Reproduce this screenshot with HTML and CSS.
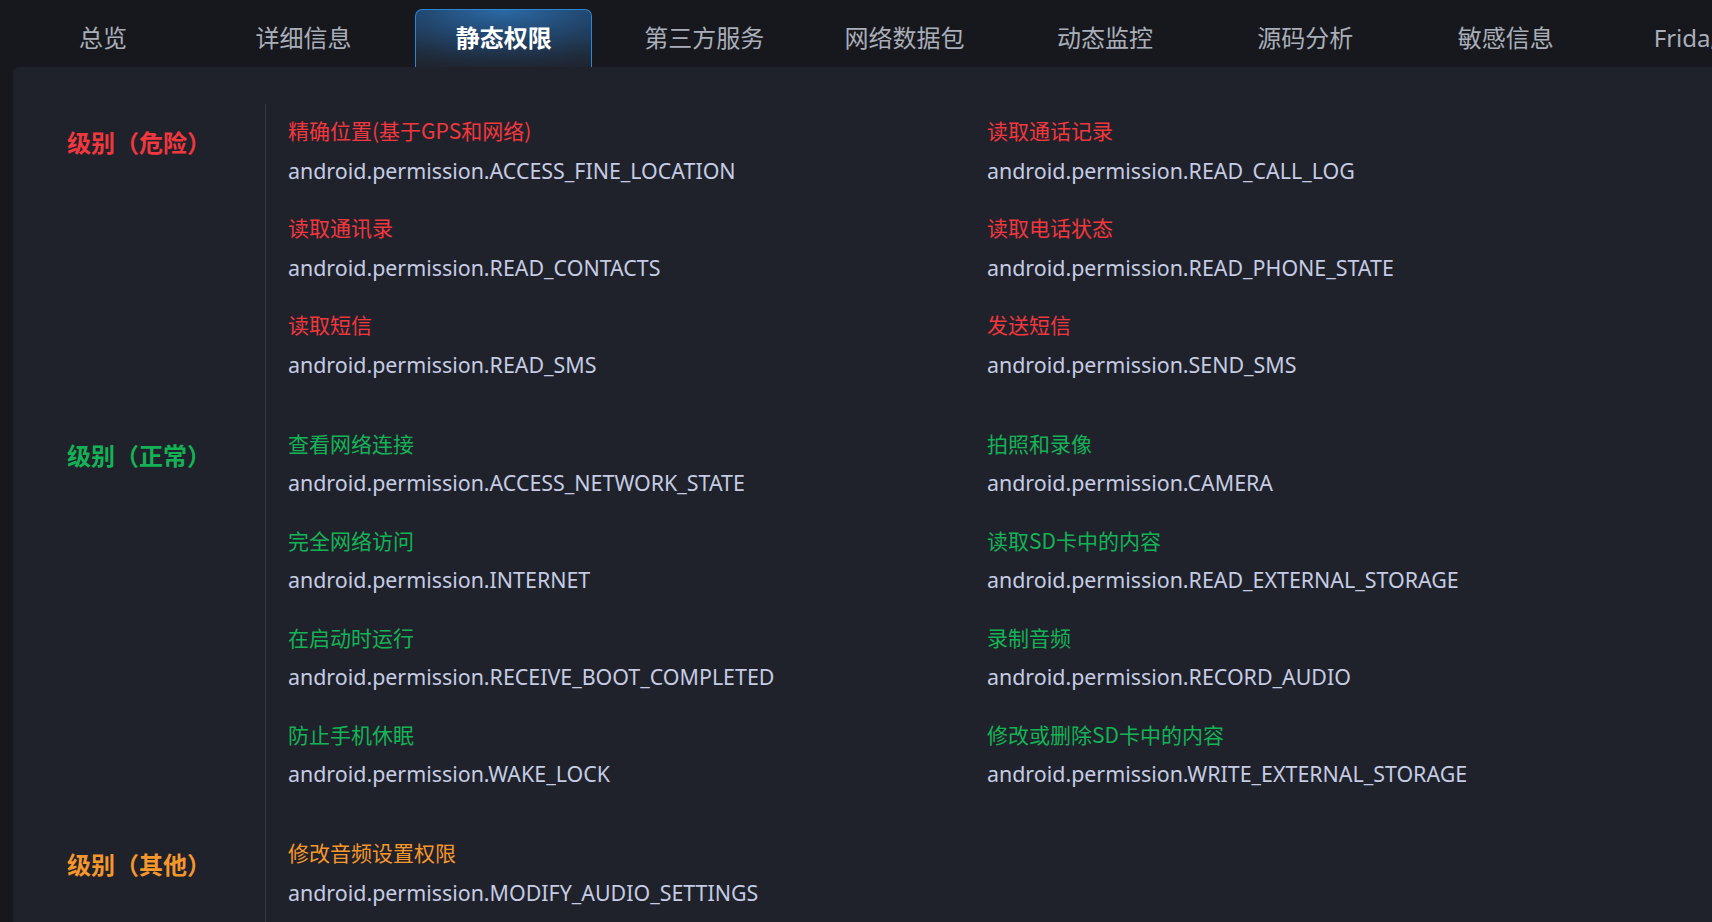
FILE: index.html
```html
<!DOCTYPE html>
<html lang="zh-CN">
<head>
<meta charset="utf-8">
<title>静态权限</title>
<link rel="stylesheet" href="styles.css">
</head>
<body>
<div class="page">
  <nav class="tabs">
    <div class="tab">总览</div>
    <div class="tab">详细信息</div>
    <div class="tab active">静态权限</div>
    <div class="tab">第三方服务</div>
    <div class="tab">网络数据包</div>
    <div class="tab">动态监控</div>
    <div class="tab">源码分析</div>
    <div class="tab">敏感信息</div>
    <div class="tab">Frida脚本</div>
  </nav>
  <main class="panel">
    <section class="level danger">
      <div class="level-label">级别（危险）</div>
      <div class="perm-grid">
        <div class="perm"><div class="perm-title">精确位置(基于GPS和网络)</div><div class="perm-name">android.permission.ACCESS_FINE_LOCATION</div></div>
        <div class="perm"><div class="perm-title">读取通话记录</div><div class="perm-name">android.permission.READ_CALL_LOG</div></div>
        <div class="perm"><div class="perm-title">读取通讯录</div><div class="perm-name">android.permission.READ_CONTACTS</div></div>
        <div class="perm"><div class="perm-title">读取电话状态</div><div class="perm-name">android.permission.READ_PHONE_STATE</div></div>
        <div class="perm"><div class="perm-title">读取短信</div><div class="perm-name">android.permission.READ_SMS</div></div>
        <div class="perm"><div class="perm-title">发送短信</div><div class="perm-name">android.permission.SEND_SMS</div></div>
      </div>
    </section>
    <section class="level normal">
      <div class="level-label">级别（正常）</div>
      <div class="perm-grid">
        <div class="perm"><div class="perm-title">查看网络连接</div><div class="perm-name">android.permission.ACCESS_NETWORK_STATE</div></div>
        <div class="perm"><div class="perm-title">拍照和录像</div><div class="perm-name">android.permission.CAMERA</div></div>
        <div class="perm"><div class="perm-title">完全网络访问</div><div class="perm-name">android.permission.INTERNET</div></div>
        <div class="perm"><div class="perm-title">读取SD卡中的内容</div><div class="perm-name">android.permission.READ_EXTERNAL_STORAGE</div></div>
        <div class="perm"><div class="perm-title">在启动时运行</div><div class="perm-name">android.permission.RECEIVE_BOOT_COMPLETED</div></div>
        <div class="perm"><div class="perm-title">录制音频</div><div class="perm-name">android.permission.RECORD_AUDIO</div></div>
        <div class="perm"><div class="perm-title">防止手机休眠</div><div class="perm-name">android.permission.WAKE_LOCK</div></div>
        <div class="perm"><div class="perm-title">修改或删除SD卡中的内容</div><div class="perm-name">android.permission.WRITE_EXTERNAL_STORAGE</div></div>
      </div>
    </section>
    <section class="level other">
      <div class="level-label">级别（其他）</div>
      <div class="perm-grid">
        <div class="perm"><div class="perm-title">修改音频设置权限</div><div class="perm-name">android.permission.MODIFY_AUDIO_SETTINGS</div></div>
      </div>
    </section>
  </main>
</div>
</body>
</html>
```
FILE: styles.css
```css
html, body {
  margin: 0;
  padding: 0;
  height: 100%;
  overflow: hidden;
}
body {
  background: #17181d;
  font-family: "Noto Sans", "Noto Sans CJK SC", sans-serif;
}
.page {
  display: flex;
  flex-direction: column;
  height: 922px;
  width: 1712px;
  overflow: hidden;
}
.tabs {
  display: flex;
  gap: 23.4px;
  height: 67px;
  padding-left: 14.5px;
  flex-shrink: 0;
  white-space: nowrap;
}
.tab {
  flex: 0 0 177px;
  height: 58px;
  margin-top: 9px;
  padding-bottom: 4px;
  display: flex;
  align-items: center;
  justify-content: center;
  font-size: 24px;
  color: #a9aeb9;
  box-sizing: border-box;
}
.tab.active {
  color: #ffffff;
  font-weight: 700;
  border: 1px solid #2b86d6;
  border-bottom: none;
  border-radius: 7px 7px 0 0;
  background: radial-gradient(ellipse 120% 110% at 50% 0%, #2b6aa6 0%, #224870 40%, #1f2c3d 80%, #20232c 100%);
}
.panel {
  flex: 1;
  margin-left: 13px;
  background: #20222b;
  border-radius: 6px 0 0 0;
  padding-top: 37px;
}
.level {
  display: flex;
}
.level-label {
  width: 252px;
  flex-shrink: 0;
  box-sizing: border-box;
  padding-left: 54px;
  margin-top: 23px;
  line-height: 30px;
  font-size: 24px;
  font-weight: 700;
  white-space: nowrap;
  font-family: "Noto Sans CJK SC", sans-serif;
}
.perm-grid {
  border-left: 1px solid #353843;
  padding: 13px 0 37px 22px;
  display: grid;
  grid-template-columns: 699px 699px;
  row-gap: 28.5px;
  align-content: start;
}
.perm-title {
  font-size: 21px;
  line-height: 27px;
  font-family: "Noto Sans CJK SC", sans-serif;
}
.perm-name {
  margin-top: 11.5px;
  font-size: 21.4px;
  line-height: 30px;
  color: #c5cce3;
}
.danger .level-label, .danger .perm-title { color: #f2373e; }
.normal .level-label, .normal .perm-title { color: #14b256; }
.other .level-label, .other .perm-title { color: #f5972b; }
.other .perm-grid { padding-bottom: 60px; }
```
